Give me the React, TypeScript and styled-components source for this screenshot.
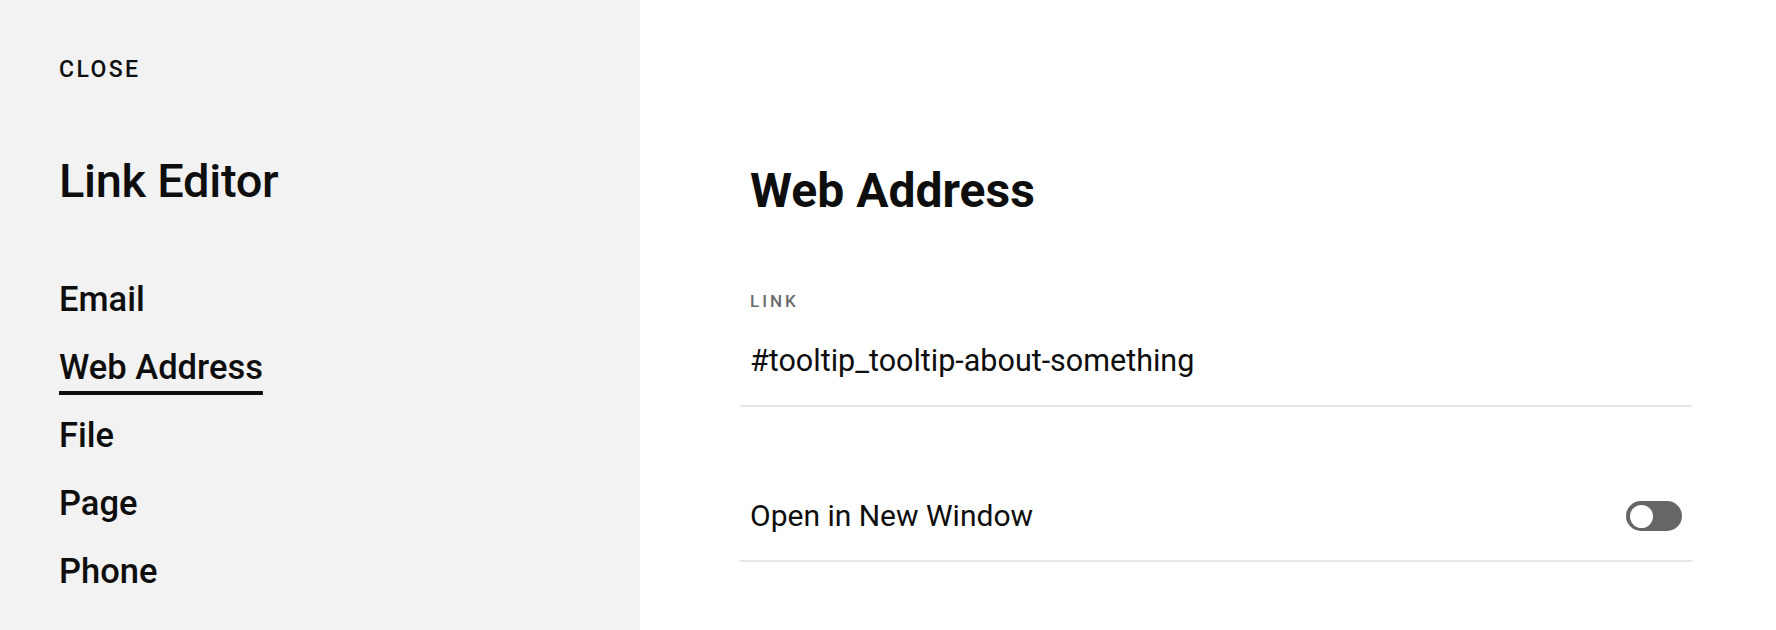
import React from "react";
import styled, { createGlobalStyle } from "styled-components";

const GlobalStyle = createGlobalStyle`
  html, body {
    margin: 0;
    padding: 0;
    height: 100%;
    background: #ffffff;
    font-family: Roboto, "Liberation Sans", Arial, sans-serif;
    color: #0e0e0e;
  }
  #root {
    height: 100%;
  }
`;

const Page = styled.div`
  display: flex;
  flex-direction: row;
  width: 100%;
  height: 630px;
  overflow: hidden;
`;

const Sidebar = styled.aside`
  display: flex;
  flex-direction: column;
  width: 640px;
  flex-shrink: 0;
  padding: 59px 0 0 59px;
  box-sizing: border-box;
  background-color: #f2f2f2;
`;

const CloseButton = styled.button`
  align-self: flex-start;
  padding: 0;
  border: none;
  background: none;
  font-family: inherit;
  font-size: 23px;
  font-weight: 500;
  line-height: 22px;
  letter-spacing: 2.4px;
  color: #0e0e0e;
  cursor: pointer;
`;

const SidebarTitle = styled.h1`
  margin: 72px 0 0 0;
  font-size: 47px;
  font-weight: 500;
  line-height: 56px;
  letter-spacing: -0.3px;
`;

const Nav = styled.nav`
  display: flex;
  flex-direction: column;
  margin-top: 56px;
`;

const NavItem = styled.a<{ $active?: boolean }>`
  display: flex;
  align-items: center;
  height: 68px;
  font-size: 34.5px;
  font-weight: 500;
  color: #0e0e0e;
  text-decoration: ${(props) => (props.$active ? "underline" : "none")};
  text-decoration-thickness: 4px;
  text-underline-offset: 12px;
  cursor: pointer;
`;

const Content = styled.main`
  flex: 1;
  display: flex;
  flex-direction: column;
  padding: 164px 84px 0 100px;
  box-sizing: border-box;
`;

const Heading = styled.h2`
  margin: 0 0 0 10px;
  font-size: 48px;
  font-weight: 700;
  line-height: 54px;
  letter-spacing: 0;
`;

const Field = styled.div`
  display: flex;
  flex-direction: column;
  margin-top: 73px;
  padding: 0 10px 26px;
  border-bottom: 2px solid #e6e6e6;
`;

const FieldLabel = styled.label`
  font-size: 17px;
  font-weight: 500;
  line-height: 20px;
  letter-spacing: 3px;
  color: #6b6b6b;
`;

const FieldValue = styled.div`
  margin-top: 32px;
  font-size: 30.5px;
  line-height: 36px;
`;

const ToggleRow = styled.div`
  display: flex;
  align-items: center;
  justify-content: space-between;
  height: 44px;
  padding: 87px 10px 22px;
  border-bottom: 2px solid #e6e6e6;
`;

const ToggleLabel = styled.span`
  font-size: 30px;
  line-height: 36px;
`;

const Switch = styled.button<{ $on: boolean }>`
  display: flex;
  align-items: center;
  justify-content: ${(props) => (props.$on ? "flex-end" : "flex-start")};
  width: 56px;
  height: 30px;
  padding: 0 4px;
  border: none;
  border-radius: 15px;
  background-color: ${(props) => (props.$on ? "#111111" : "#666666")};
  box-sizing: border-box;
  cursor: pointer;
`;

const Knob = styled.span`
  width: 23px;
  height: 23px;
  border-radius: 50%;
  background-color: #ffffff;
`;

const items = ["Email", "Web Address", "File", "Page", "Phone"];

const App: React.FC = () => {
  const [active, setActive] = React.useState("Web Address");
  const [newWindow, setNewWindow] = React.useState(false);

  return (
    <>
      <GlobalStyle />
      <Page>
        <Sidebar>
          <CloseButton>CLOSE</CloseButton>
          <SidebarTitle>Link Editor</SidebarTitle>
          <Nav>
            {items.map((item) => (
              <NavItem
                key={item}
                $active={item === active}
                onClick={() => setActive(item)}
              >
                {item}
              </NavItem>
            ))}
          </Nav>
        </Sidebar>
        <Content>
          <Heading>Web Address</Heading>
          <Field>
            <FieldLabel>LINK</FieldLabel>
            <FieldValue>#tooltip_tooltip-about-something</FieldValue>
          </Field>
          <ToggleRow>
            <ToggleLabel>Open in New Window</ToggleLabel>
            <Switch $on={newWindow} onClick={() => setNewWindow(!newWindow)}>
              <Knob />
            </Switch>
          </ToggleRow>
        </Content>
      </Page>
    </>
  );
};

export default App;
